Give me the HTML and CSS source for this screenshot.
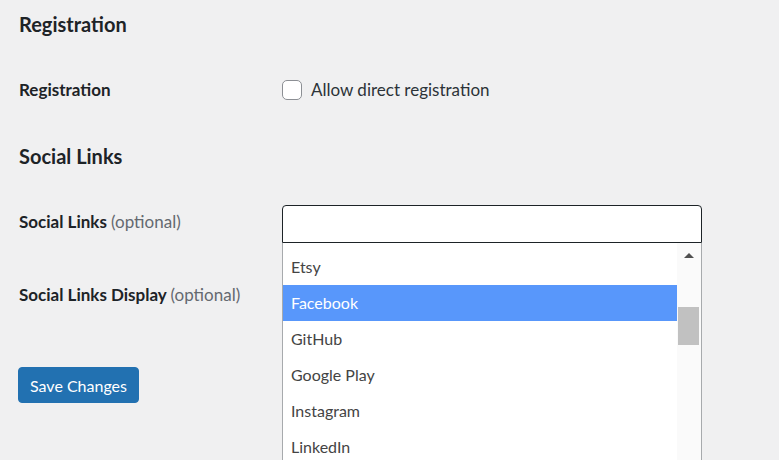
FILE: index.html
```html
<!DOCTYPE html>
<html>
<head>
<meta charset="utf-8">
<link rel="stylesheet" href="styles.css">
</head>
<body>
<div class="wrap">
  <h2 class="section-title first">Registration</h2>
  <div class="row row-reg">
    <div class="th">Registration</div>
    <div class="td">
      <label class="check"><span class="box"></span><span>Allow direct registration</span></label>
    </div>
  </div>
  <h2 class="section-title">Social Links</h2>
  <div class="row row-social">
    <div class="th">Social Links <span class="opt">(optional)</span></div>
    <div class="td">
      <div class="select">
        <div class="search"></div>
        <div class="dropdown">
          <div class="options">
            <div class="option">Etsy</div>
            <div class="option active">Facebook</div>
            <div class="option">GitHub</div>
            <div class="option">Google Play</div>
            <div class="option">Instagram</div>
            <div class="option">LinkedIn</div>
          </div>
          <div class="scrollbar">
            <span class="arrow"></span>
            <span class="thumb"></span>
          </div>
        </div>
      </div>
    </div>
  </div>
  <div class="row row-display">
    <div class="th">Social Links Display <span class="opt">(optional)</span></div>
    <div class="td"></div>
  </div>
  <div class="submit">
    <button class="button-primary">Save Changes</button>
  </div>
</div>
</body>
</html>
```

FILE: styles.css
```css
html, body {
  margin: 0;
  padding: 0;
  background: #f0f0f1;
  height: 100%;
  overflow: hidden;
}
body {
  font-family: Lato, "Noto Sans", sans-serif;
  color: #1d2327;
}
.wrap {
  padding-left: 19px;
}
.section-title {
  margin: 0;
  font-size: 20px;
  line-height: 28px;
  font-weight: 700;
  height: 28px;
}
.section-title.first {
  padding-top: 10px;
}
.row {
  display: flex;
}
.th {
  width: 263px;
  flex: none;
  font-size: 17px;
  line-height: 24px;
  font-weight: 700;
}
.opt {
  font-weight: 400;
  color: #646970;
}
.td {
  flex: none;
  width: 420px;
}
.row-reg {
  height: 104px;
  align-items: center;
}
.check {
  display: flex;
  align-items: center;
  gap: 9px;
  font-size: 17px;
  line-height: 24px;
  color: #2c3338;
}
.box {
  width: 18px;
  height: 18px;
  border: 1px solid #8c8f94;
  border-radius: 5px;
  background: #fff;
  flex: none;
}
.row-social {
  padding-top: 35px;
  padding-bottom: 21px;
}
.row-social .th {
  padding-top: 5px;
}
.row-display {
  padding-top: 19px;
}
.select {
  position: relative;
  width: 420px;
}
.search {
  height: 36px;
  border: 1px solid #1d2327;
  border-radius: 4px 4px 0 0;
  background: #fff;
}
.dropdown {
  position: absolute;
  top: 38px;
  left: 0;
  width: 418px;
  height: 217px;
  border: 1px solid #a7aaad;
  border-top: none;
  border-bottom: none;
  background: #fff;
  display: flex;
  overflow: hidden;
  z-index: 2;
}
.options {
  flex: 1;
  padding-top: 6px;
}
.option {
  height: 36px;
  line-height: 36px;
  padding-left: 8px;
  font-size: 16px;
  color: #444;
}
.option.active {
  background: #5897fb;
  color: #fff;
}
.scrollbar {
  width: 24px;
  flex: none;
  background: #fafafa;
  position: relative;
}
.arrow {
  position: absolute;
  left: 7px;
  top: 10px;
  width: 0;
  height: 0;
  border-left: 5px solid transparent;
  border-right: 5px solid transparent;
  border-bottom: 5px solid #505050;
}
.thumb {
  position: absolute;
  left: 1px;
  top: 64px;
  width: 21px;
  height: 38px;
  background: #c1c1c1;
}
.submit {
  padding-top: 60px;
}
.button-primary {
  font-family: inherit;
  font-size: 16px;
  height: 36px;
  width: 121px;
  padding: 0;
  background: #2271b1;
  color: #fff;
  border: 1px solid #2271b1;
  border-radius: 4px;
  margin-left: -1px;
}
```
